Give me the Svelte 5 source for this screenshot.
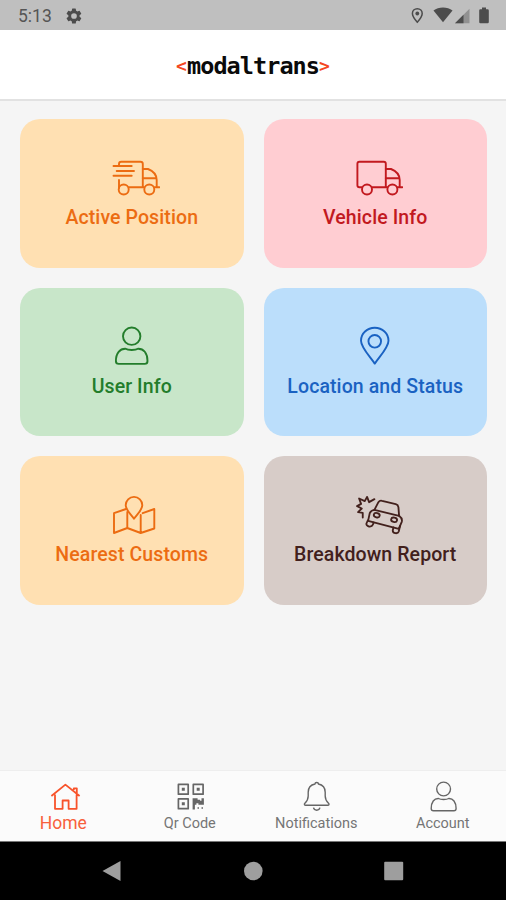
<script lang="ts">
	type Card = {
		title: string;
		icon: string;
		color: string;
		background: string;
	};

	const cards: Card[] = [
		{ title: 'Active Position', icon: 'delivery', color: '#ec6c12', background: '#ffe0b2' },
		{ title: 'Vehicle Info', icon: 'truck', color: '#c2191f', background: '#ffcdd2' },
		{ title: 'User Info', icon: 'user', color: '#237d2b', background: '#c8e6c9' },
		{ title: 'Location and Status', icon: 'pin', color: '#1a62c2', background: '#bbdefb' },
		{ title: 'Nearest Customs', icon: 'map', color: '#ec6c12', background: '#ffe0b2' },
		{ title: 'Breakdown Report', icon: 'crash', color: '#42201c', background: '#d7ccc8' }
	];

	const tabs = [
		{ label: 'Home', icon: 'home' },
		{ label: 'Qr Code', icon: 'qr' },
		{ label: 'Notifications', icon: 'bell' },
		{ label: 'Account', icon: 'account' }
	];

	let activeTab = $state('home');
</script>

<div class="screen">
	<div class="status-bar">
		<span class="clock">5:13</span>
		<svg class="gear" viewBox="0 0 24 24" width="18" height="18">
			<path
				fill-rule="evenodd"
				d="M19.4 13a7.500 7.500 0 0 0 0-2l2.100-1.600a.5.5 0 0 0 .1-.6l-2-3.500a.5.5 0 0 0-.6-.2l-2.500 1a7.300 7.300 0 0 0-1.700-1l-.4-2.600a.5.5 0 0 0-.5-.5h-4a.5.5 0 0 0-.5.5L9 5.100a7.300 7.300 0 0 0-1.700 1l-2.500-1a.5.5 0 0 0-.6.2l-2 3.500a.5.5 0 0 0 .1.6L4.500 11a7.500 7.500 0 0 0 0 2l-2.200 1.600a.5.5 0 0 0-.1.6l2 3.500c.1.2.4.3.6.2l2.500-1a7.300 7.300 0 0 0 1.700 1l.4 2.600c0 .3.2.5.5.5h4c.3 0 .5-.2.5-.5l.4-2.600a7.300 7.300 0 0 0 1.700-1l2.500 1c.2.1.5 0 .6-.2l2-3.500a.5.500 0 0 0-.1-.6zM12 15.800a3.800 3.800 0 1 1 0-7.600 3.800 3.800 0 0 1 0 7.600z"
			/>
		</svg>
		<svg class="signals" viewBox="0 0 80 18" width="80" height="18">
			<path
				d="M6.300 1.700c-2.900 0-4.900 2.100-4.900 4.800 0 3.200 4.900 8.700 4.900 8.700s4.900-5.500 4.900-8.700c0-2.700-2-4.800-4.900-4.800z"
				fill="none"
				stroke="#4c4c4c"
				stroke-width="1.500"
			/>
			<circle cx="6.300" cy="6.500" r="1.900" />
			<path d="M22.500 3.500C27.500-.6 36.500-.6 41.500 3.500L32 15.200z" />
			<path d="M44 16.200 58.500 1.700V16.200z" fill="#919191" />
			<path d="M44 16.200 52.500 7.700V16.200z" />
			<path d="M71 .5h4v1.700h1.600q1.200 0 1.200 1.200v11.600q0 1.200-1.200 1.200h-7.200q-1.200 0-1.200-1.200V3.400q0-1.200 1.200-1.200h1.600z" />
		</svg>
	</div>

	<header>
		<div class="logo"><span>&lt;</span>modaltrans<span>&gt;</span></div>
	</header>

	<main>
		{#each cards as card (card.title)}
			<button class="card" style={`--color: ${card.color}; --background: ${card.background};`}>
				{#if card.icon === 'crash'}
					<svg class="card-icon crash" viewBox="201.750 13.500 168 126">
						<path d="M284 26 268 35 262 19 255 32 238 24 244 40 232 47 246 54 235 65 249 67 249 81" />
						<path d="M284 58 296 35Q300 29 307 31L348 41Q355 43 356 50L358 76Z" />
						<path d="M284 58Q274 59 270 68L265 91L357 115L366 94Q369 84 358 76" />
						<path d="M264 90 260 99Q259 106 268 108 277 109 279 103L282 96" />
						<path d="M341 111 339 120Q339 127 347 128 355 129 357 123L361 106" />
						<ellipse cx="291" cy="74" rx="9" ry="6.500" transform="rotate(14 291 74)" />
						<ellipse cx="343" cy="88" rx="9" ry="6.500" transform="rotate(14 343 88)" />
					</svg>
				{:else}
					<svg class="card-icon" viewBox="-2 0 56 42">
						{#if card.icon === 'delivery'}
							<path d="M13 8V7Q13 4.700 15.300 4.700H34.500Q36.800 4.700 36.800 7V30.300M13 23V31M22.800 30.300H38M48.600 30.300H53.300" />
							<path d="M7.500 9H25.700M10.700 14H28M7.500 18.700H25.700" />
							<path d="M36.800 12H42Q50.700 15.500 50.700 23V30M36.800 21.300H50.400" />
							<circle cx="17.700" cy="32.500" r="5" />
							<circle cx="43.300" cy="32.500" r="5" />
						{:else if card.icon === 'truck'}
							<path d="M13 30.300H10.400Q8.400 30.300 8.400 28.300V6.700Q8.400 4.700 10.400 4.700H34.800Q36.800 4.700 36.800 6.700V30.300M23 30.300H38.300M48.500 30.300H53.400" />
							<path d="M36.800 12H42Q50.700 15.500 50.700 23V30M36.800 21.300H50.400" />
							<circle cx="18" cy="32.500" r="5" />
							<circle cx="43.400" cy="32.500" r="5" />
						{:else if card.icon === 'user'}
							<circle cx="25.700" cy="10.200" r="8.700" />
							<path d="M12.700 37.900H38.700Q41.500 37.900 41.500 35C41.500 27 37.500 22.500 32 22.700 29.500 24.400 22 24.400 19.500 22.700 14 22.500 9.900 27 9.900 35Q9.900 37.900 12.700 37.900Z" />
						{:else if card.icon === 'pin'}
							<path d="M25.750 37.600C21 30.500 12 21.500 12 14.700A13.750 13 0 0 1 39.500 14.700C39.500 21.500 30.500 30.500 25.750 37.600Z" />
							<circle cx="25.750" cy="15.300" r="6.300" />
						{:else}
							<path d="M20 14 8 18.200V38L21.300 33 34.700 38 48.300 33.500V14L36.700 18.200M21.300 17V33M34.700 20V38" />
							<path d="M28 23.800C25 19.500 19.700 15 19.700 10.200A8.300 8.300 0 0 1 36.300 10.200C36.300 15 31 19.500 28 23.800Z" />
						{/if}
					</svg>
				{/if}
				<span class="card-title">{card.title}</span>
			</button>
		{/each}
	</main>

	<nav class="tabs">
		{#each tabs as tab (tab.icon)}
			<button class="tab" class:active={activeTab === tab.icon} onclick={() => (activeTab = tab.icon)}>
				<svg class="tab-icon" viewBox="0 0 32 32">
					{#if tab.icon === 'home'}
						<path d="M4.400 16 18.400 4.600 32.600 16M8 14.500V28.800H15.600V20.500H21.600V28.800H29.600V14.500M26.800 10V8.300H29.800V13" />
					{:else if tab.icon === 'qr'}
						<g stroke-width="1.700">
							<rect x="4.400" y="4.400" width="9.800" height="9.800" />
							<rect x="19.300" y="4.400" width="9.800" height="9.800" />
							<rect x="4.400" y="18.900" width="9.800" height="9.800" />
						</g>
						<path
							class="solid"
							d="M7.800 7.800h3v3h-3zM22.700 7.800h3v3h-3zM7.800 22.300h3v3h-3zM18.600 18.300h5v1.500h2.500v1h1.400v-2.500h2.400v6.500h-5.500v-1.500h-2v1.500h-1.500v4.600h-2.300zM23.500 27.300h1.500v1.500h-1.500zM27.500 27.300h1.500v1.500h-1.500z"
						/>
					{:else if tab.icon === 'bell'}
						<path d="M15 4Q15 2.500 16.700 2.500T18.400 4C22.800 4.800 25.200 8 25.200 12.300V16C25.200 19.500 26.200 21 28.500 23.300 29.500 24.300 28.900 25.200 27.800 25.200H5.600C4.500 25.200 3.900 24.300 4.900 23.300 7.200 21 8.200 19.500 8.200 16V12.300C8.200 8 10.600 4.800 15 4ZM13.500 27.700Q14 30.200 16.700 30.200T19.900 27.700" />
					{:else}
						<circle cx="16.600" cy="9" r="6.900" />
						<path d="M6.500 30.700H26.900Q29.100 30.700 29.100 28.500C29.100 22 26 18.300 21.700 18.500 19.500 19.800 13.700 19.800 11.500 18.500 7.200 18.300 4.200 22 4.200 28.500Q4.200 30.700 6.500 30.700Z" />
					{/if}
				</svg>
				<span class="tab-label">{tab.label}</span>
			</button>
		{/each}
	</nav>

	<div class="system-nav">
		<svg viewBox="0 0 20 20" width="20" height="20"><path d="M.5 10 18.500 0V20Z" /></svg>
		<svg viewBox="0 0 20 20" width="20" height="20"><circle cx="10.300" cy="10" r="9.300" /></svg>
		<svg viewBox="0 0 20 20" width="20" height="20"><rect x=".2" y=".7" width="19" height="18.600" rx="1" /></svg>
	</div>
</div>

<style>
	:global(body) {
		margin: 0;
	}

	.screen {
		display: flex;
		flex-direction: column;
		width: 506px;
		height: 900px;
		overflow: hidden;
		background: #f5f5f5;
		font-family: Roboto, sans-serif;
	}

	button {
		display: flex;
		flex-direction: column;
		align-items: center;
		margin: 0;
		padding: 0;
		border: 0;
		background: none;
		font-family: inherit;
	}

	.status-bar {
		display: flex;
		flex: none;
		align-items: center;
		box-sizing: border-box;
		height: 30px;
		padding: 1px 15px 0 18px;
		background: #bfbfbf;
		color: #555;
		fill: #4c4c4c;
	}

	.clock {
		width: 34px;
		font-size: 17.500px;
	}

	.gear {
		margin-left: 13px;
	}

	.signals {
		margin-left: auto;
	}

	header {
		display: flex;
		flex: none;
		align-items: center;
		justify-content: center;
		box-sizing: border-box;
		height: 71px;
		padding-top: 2px;
		border-bottom: 2px solid #e2e2e2;
		background: #fff;
	}

	.logo {
		display: flex;
		align-items: center;
		color: #0a0a0a;
		font: bold 23.500px/26px 'DejaVu Sans Mono', monospace;
		letter-spacing: -0.950px;
	}

	.logo span {
		width: 11px;
		color: #f4471f;
		font-size: 18px;
		letter-spacing: 0;
	}

	main {
		display: grid;
		flex: 1;
		grid-template-columns: 1fr 1fr;
		grid-auto-rows: 148.700px;
		gap: 20px;
		align-content: start;
		padding: 17.850px 19px 0 20px;
	}

	.card {
		border-radius: 20px;
		background: var(--background);
		color: var(--color);
	}

	.card-icon {
		width: 56px;
		height: 42px;
		margin-top: 38.500px;
		fill: none;
		stroke: var(--color);
		stroke-width: 1.900;
		stroke-linecap: round;
		stroke-linejoin: round;
	}

	.crash {
		stroke-width: 5.500;
	}

	.card-title {
		margin-top: 6.500px;
		font-size: 19.500px;
		font-weight: 500;
		line-height: 24px;
		letter-spacing: 0.100px;
		white-space: nowrap;
	}

	.tabs {
		display: grid;
		flex: none;
		grid-template-columns: repeat(4, 1fr);
		box-sizing: border-box;
		height: 71px;
		border-top: 1px solid #eee;
		background: #fbfbfb;
	}

	.tab {
		padding-top: 9px;
		color: #757575;
	}

	.tab-icon {
		width: 32px;
		height: 32px;
		overflow: visible;
		fill: none;
		stroke: #666;
		stroke-width: 1.400;
		stroke-linejoin: round;
	}

	.solid {
		fill: #666;
		stroke: none;
	}

	.tab-label {
		margin-top: 1px;
		font-size: 14.500px;
		line-height: 22px;
	}

	.active {
		color: #f8603c;
	}

	.active .tab-icon {
		stroke: #f8532b;
		stroke-width: 1.800;
	}

	.active .tab-label {
		font-size: 17.500px;
		line-height: 21px;
	}

	.system-nav {
		display: flex;
		flex: none;
		justify-content: space-between;
		align-items: center;
		box-sizing: border-box;
		height: 59px;
		padding: 0 102px;
		border-top: 1px solid #777;
		background: #000;
		fill: #9e9e9e;
	}
</style>
